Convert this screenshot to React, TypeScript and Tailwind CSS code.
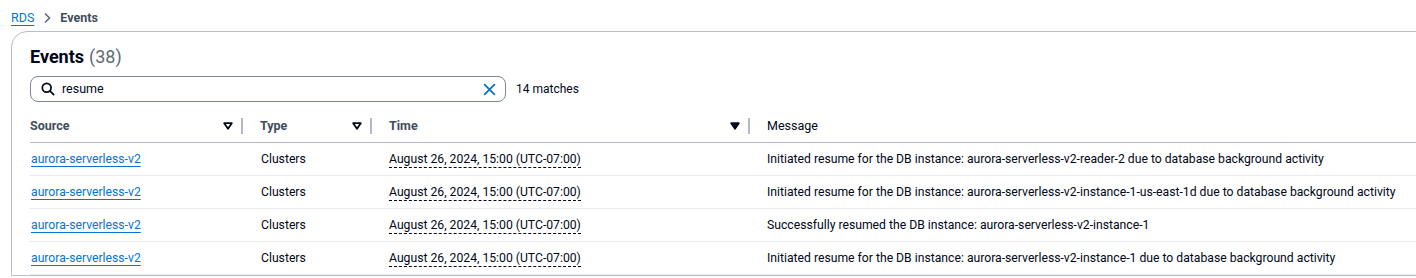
const rows = [
  "Initiated resume for the DB instance: aurora-serverless-v2-reader-2 due to database background activity",
  "Initiated resume for the DB instance: aurora-serverless-v2-instance-1-us-east-1d due to database background activity",
  "Successfully resumed the DB instance: aurora-serverless-v2-instance-1",
  "Initiated resume for the DB instance: aurora-serverless-v2-instance-1 due to database background activity",
];

function SortIcon({ filled = false }: { filled?: boolean }) {
  return (
    <svg width="10" height="8" viewBox="0 0 10 8" className="ml-auto shrink-0">
      <path
        d="M1.2 1.2h7.6L5 6.8z"
        fill={filled ? "#000716" : "none"}
        stroke="#000716"
        strokeWidth="1.8"
        strokeLinejoin="round"
      />
    </svg>
  );
}

function Divider() {
  return <span className="ml-[8px] h-[16px] w-[2px] shrink-0 bg-[#b4bac3]" />;
}

export default function App() {
  return (
    <div
      className="h-[278px] w-full overflow-hidden bg-white text-[#000716]"
      style={{ fontFamily: "Roboto, 'Open Sans', sans-serif" }}
    >
      <div className="flex h-[31px] items-center gap-[8px] pl-[11px] pt-[5px] text-[12.5px]">
        <span className="text-[#0972d3] underline underline-offset-[3px]">RDS</span>
        <svg width="10" height="12" viewBox="0 0 10 12">
          <path d="M3 1.5l4.5 4.5L3 10.5" fill="none" stroke="#5f6b7a" strokeWidth="1.6" />
        </svg>
        <span className="font-bold text-[#414d5c]">Events</span>
      </div>

      <div className="ml-[11px] w-[1440px] rounded-t-[16px] border border-[#b6bec9] pl-[18px]">
        <div className="flex h-[44px] items-center pt-[4px] text-[18px]">
          <span className="font-bold">Events</span>
          <span className="ml-[5px] text-[#5f6b7a]">(38)</span>
        </div>

        <div className="flex items-center">
          <div className="flex h-[26px] w-[476px] items-center rounded-[8px] border border-[#7d8998] pl-[10px] pr-[8px]">
            <svg width="14" height="14" viewBox="0 0 16 16">
              <circle cx="6.5" cy="6.5" r="5" fill="none" stroke="#000716" strokeWidth="2" />
              <path d="M10.2 10.2L14.5 14.5" stroke="#000716" strokeWidth="2" strokeLinecap="round" />
            </svg>
            <span className="ml-[7px] text-[12.5px]">resume</span>
            <svg width="13" height="13" viewBox="0 0 16 16" className="ml-auto mr-[1px]">
              <path d="M2 2l12 12M14 2L2 14" stroke="#0972d3" strokeWidth="2.2" strokeLinecap="round" />
            </svg>
          </div>
          <span className="ml-[10px] text-[12px]">14 matches</span>
        </div>

        <div className="mt-[8px] w-[1390px]">
          <div className="grid h-[33px] grid-cols-[213px_129px_378px_1fr] items-center border-b border-[#b4bac3] text-[12.5px] font-bold text-[#414d5c]">
            <div className="flex items-center">
              <span>Source</span>
              <SortIcon />
              <Divider />
            </div>
            <div className="flex items-center pl-[17px]">
              <span>Type</span>
              <SortIcon />
              <Divider />
            </div>
            <div className="flex items-center pl-[17px]">
              <span>Time</span>
              <SortIcon filled />
              <Divider />
            </div>
            <div className="pl-[17px] font-normal text-[#000716]">Message</div>
          </div>

          {rows.map((msg, i) => (
            <div
              key={i}
              className="grid h-[33px] grid-cols-[213px_129px_378px_1fr] items-center border-b border-[#e9ebed] text-[12.2px]"
            >
              <div className="pl-[1px]">
                <span className="text-[#0972d3] underline underline-offset-[3px]">aurora-serverless-v2</span>
              </div>
              <div className="pl-[18px]">Clusters</div>
              <div className="pl-[17px]">
                <span className="border-b border-dashed border-[#000716] pb-[1px]">
                  August 26, 2024, 15:00 (UTC-07:00)
                </span>
              </div>
              <div className="pl-[17px]">{msg}</div>
            </div>
          ))}
        </div>
      </div>
    </div>
  );
}
